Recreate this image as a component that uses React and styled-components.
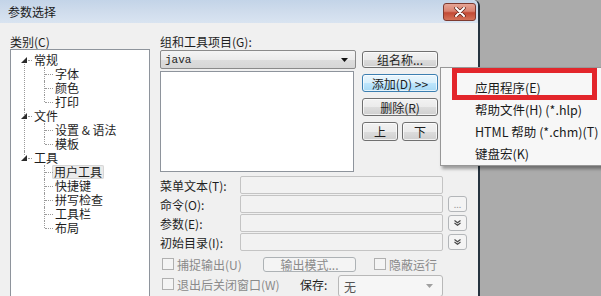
import React from 'react';
import styled, { createGlobalStyle, css } from 'styled-components';

const GlobalStyle = createGlobalStyle`
  html, body {
    margin: 0;
    padding: 0;
    width: 601px;
    height: 296px;
    overflow: hidden;
    background: #ababab;
  }
  body {
    font-family: "Noto Sans CJK SC", "Liberation Sans", sans-serif;
    font-size: 12px;
    color: #1e1e1e;
  }
`

const cjk = `"Noto Sans CJK SC", "Liberation Sans", sans-serif`

// Window

const Screen = styled.div`
  position: relative;
  width: 601px;
  height: 296px;
  overflow: hidden;
`

const Dialog = styled.div`
  width: 478px;
  height: 330px;
  background: #f0f0f0;
  border-right: 2px solid #26333f;
  border-top-right-radius: 6px;
  display: flex;
  flex-direction: column;
`

const TitleBar = styled.div`
  height: 23px;
  flex: none;
  display: flex;
  justify-content: space-between;
  align-items: flex-start;
  padding: 0 2px 0 8px;
  background: linear-gradient(to bottom, #c3d4e8 0%, #cfdcec 50%, #d9e4f1 100%);
  border-top-right-radius: 6px;
`

const Title = styled.div`
  font-size: 12px;
  line-height: 24px;
  color: #1a1a1a;
`

const CloseButton = styled.div`
  width: 31px;
  height: 16px;
  margin-top: 3px;
  border: 1px solid #7d3a30;
  border-radius: 3px;
  background: linear-gradient(to bottom, #e6a596 0%, #d98270 45%, #c24a35 55%, #d4735a 100%);
  display: flex;
  align-items: center;
  justify-content: center;
`

const Body = styled.div`
  flex: 1;
  display: flex;
  padding: 11px 0 0 10px;
`

// Category tree

const LeftColumn = styled.div`
  width: 140px;
  display: flex;
  flex-direction: column;
`

const Label = styled.div`
  height: 15px;
  line-height: 15px;
  font-size: 12px;
  white-space: nowrap;
`

const TreeBox = styled.div`
  flex: 1;
  background: #fff;
  border: 1px solid #8e949c;
  padding-top: 3px;
`

const dotted = css`
  content: '';
  position: absolute;
  border-color: #9a9a9a;
  border-style: dotted;
  border-width: 0;
`

const Group = styled.div`
  position: relative;
  &::before {
    ${dotted};
    left: 13px;
    border-left-width: 1px;
    top: ${({ $first }) => ($first ? '11px' : '0')};
    ${({ $last }) => ($last ? 'height: 4px;' : 'bottom: 0;')}
  }
`

const GroupRow = styled.div`
  position: relative;
  height: 14px;
  padding-left: 23px;
  &::after {
    ${dotted};
    left: 17px;
    width: 4px;
    top: 7px;
    border-top-width: 1px;
  }
`

const Toggle = styled.svg`
  position: absolute;
  left: 10px;
  top: 4px;
  z-index: 1;
`

const ChildRow = styled.div`
  position: relative;
  height: 14px;
  padding-left: 44px;
  &::before {
    ${dotted};
    left: 33px;
    top: 0;
    height: ${({ $last }) => ($last ? '7px' : '14px')};
    border-left-width: 1px;
  }
  &::after {
    ${dotted};
    left: 34px;
    width: 8px;
    top: 7px;
    border-top-width: 1px;
  }
`

const NodeText = styled.span`
  display: inline-block;
  height: 14px;
  line-height: 14px;
  font-size: 12px;
  white-space: nowrap;
  vertical-align: top;
  ${({ $selected }) =>
    $selected &&
    css`
      margin-left: -3px;
      padding: 0 2px;
      background: #ebebeb;
      box-shadow: inset 0 0 0 1px #d6d6d6;
      border-radius: 2px;
    `}
`

// Right side

const RightColumn = styled.div`
  margin-left: 10px;
  display: flex;
  flex-direction: column;
`

const TopArea = styled.div`
  display: flex;
  gap: 6px;
  margin-top: 1px;
`

const ListColumn = styled.div`
  width: 196px;
  display: flex;
  flex-direction: column;
  gap: 2px;
`

const Combo = styled.div`
  height: 17px;
  border: 1px solid #8a8a8a;
  border-radius: 2px;
  background: linear-gradient(to bottom, #f4f4f4 0%, #ebebeb 50%, #dddddd 51%, #d6d6d6 100%);
  display: flex;
  align-items: center;
  justify-content: space-between;
  padding: 0 7px 0 4px;
  font-family: "Liberation Mono", monospace;
  font-size: 11px;
`

const ListBox = styled.div`
  height: 99px;
  width: 192px;
  background: #fff;
  border: 1px solid #8e949c;
`

const ButtonColumn = styled.div`
  width: 76px;
  display: flex;
  flex-direction: column;
  gap: 6px;
  padding-top: 1px;
`

const ButtonRow = styled.div`
  display: flex;
  justify-content: space-between;
`

const Button = styled.div`
  box-sizing: border-box;
  width: ${({ $w }) => $w || 76}px;
  height: ${({ $h }) => $h || 18}px;
  border: 1px solid #707070;
  border-radius: 3px;
  background: linear-gradient(to bottom, #f2f2f2 0%, #ebebeb 50%, #dddddd 51%, #cfcfcf 100%);
  box-shadow: inset 0 0 0 1px rgba(255, 255, 255, 0.7);
  display: flex;
  align-items: center;
  justify-content: center;
  font-size: 12px;
  white-space: nowrap;
  ${({ $focus }) =>
    $focus &&
    css`
      border-color: #3c7fb1;
      background: linear-gradient(to bottom, #eaf6fd 0%, #d9f0fc 50%, #bee6fd 51%, #a7d9f5 100%);
    `}
  ${({ $disabled }) =>
    $disabled &&
    css`
      border-color: #adb2b5;
      background: #f4f4f4;
      color: #8a8a8a;
      box-shadow: none;
    `}
`

const Form = styled.div`
  display: flex;
  flex-direction: column;
  gap: 1px;
  margin-top: 4px;
`

const FormRow = styled.div`
  display: flex;
  align-items: center;
  height: 18px;
`

const FormLabel = styled.div`
  width: 80px;
  font-size: 12px;
  white-space: nowrap;
`

const Input = styled.div`
  box-sizing: border-box;
  width: 203px;
  height: 18px;
  border: 1px solid #c4c4c4;
  border-radius: 2px;
  background: #f2f2f2;
`

const SmallButton = styled.div`
  box-sizing: border-box;
  width: 19px;
  height: 16px;
  margin-left: 5px;
  border: 1px solid #b3b6b9;
  border-radius: 3px;
  background: #f4f4f4;
  display: flex;
  align-items: center;
  justify-content: center;
  font-size: 9px;
  color: #9a9a9a;
`

const OptionRow = styled.div`
  display: flex;
  align-items: center;
  height: ${({ $h }) => $h}px;
  margin-top: ${({ $top }) => $top}px;
  padding-left: 2px;
`

const CheckItem = styled.div`
  display: flex;
  align-items: center;
  gap: 3px;
  width: ${({ $w }) => ($w ? `${$w}px` : 'auto')};
  margin-left: ${({ $ml }) => $ml || 0}px;
  white-space: nowrap;
  color: #8a8a8a;
  font-size: 12px;
`

const CheckBox = styled.span`
  box-sizing: border-box;
  width: 12px;
  height: 12px;
  border: 1px solid #b0b0b0;
  background: #f4f4f4;
`

const SaveLabel = styled.div`
  width: 38px;
  font-size: 12px;
`

const SaveCombo = styled.div`
  box-sizing: border-box;
  width: 105px;
  height: 22px;
  margin-top: 4px;
  border: 1px solid #b8b8b8;
  border-radius: 3px;
  background: #f6f6f6;
  display: flex;
  align-items: center;
  justify-content: space-between;
  padding: 0 9px 0 5px;
  color: #555;
`

// Popup menu

const Menu = styled.div`
  position: absolute;
  left: 440px;
  top: 67px;
  width: 175px;
  height: 99px;
  padding-top: 9px;
  box-sizing: border-box;
  background: #f7f7f7;
  border: 1px solid #979797;
  box-shadow: 2px 3px 3px rgba(0, 0, 0, 0.35);
`

const MenuItem = styled.div`
  height: 22px;
  line-height: 22px;
  padding-left: 34px;
  font-family: ${cjk};
  font-size: 12.5px;
  color: #1a1a1a;
  white-space: nowrap;
`

const Highlight = styled.div`
  position: absolute;
  left: 452px;
  top: 68px;
  width: 145px;
  height: 32px;
  box-sizing: border-box;
  border: 5px solid #e3262b;
`

const tree = [
  { label: '常规', children: ['字体', '颜色', '打印'] },
  { label: '文件', children: ['设置 & 语法', '模板'] },
  { label: '工具', children: ['用户工具', '快捷键', '拼写检查', '工具栏', '布局'] },
]

const fields = [
  { label: '菜单文本(T):' },
  { label: '命令(O):', button: 'dots' },
  { label: '参数(E):', button: 'down' },
  { label: '初始目录(I):', button: 'down' },
]

const DoubleDown = () => (
  <svg width="7" height="6" viewBox="0 0 7 6">
    <path d="M0.5 0.5 L3.5 2.8 L6.5 0.5 M0.5 3 L3.5 5.3 L6.5 3" fill="none" stroke="#444" strokeWidth="1.1" />
  </svg>
)

const ArrowDown = ({ color = '#111' }) => (
  <svg width="7" height="4" viewBox="0 0 7 4">
    <path d="M0 0 H7 L3.5 4 Z" fill={color} />
  </svg>
)

export default function App() {
  return (
    <Screen>
      <GlobalStyle />
      <Dialog>
        <TitleBar>
          <Title>参数选择</Title>
          <CloseButton>
            <svg width="12" height="10" viewBox="0 0 12 10">
              <path d="M2 1 L10 9 M10 1 L2 9" stroke="#5a2219" strokeWidth="3.4" strokeLinecap="round" />
              <path d="M2 1 L10 9 M10 1 L2 9" stroke="#fff" strokeWidth="2" strokeLinecap="round" />
            </svg>
          </CloseButton>
        </TitleBar>
        <Body>
          <LeftColumn>
            <Label>类别(C)</Label>
            <TreeBox>
              {tree.map((group, gi) => (
                <Group key={group.label} $first={gi === 0} $last={gi === tree.length - 1}>
                  <GroupRow>
                    <Toggle width="6" height="6" viewBox="0 0 6 6">
                      <path d="M6 0 V6 H0 Z" fill="#2b2b2b" />
                    </Toggle>
                    <NodeText>{group.label}</NodeText>
                  </GroupRow>
                  {group.children.map((child, ci) => (
                    <ChildRow key={child} $last={ci === group.children.length - 1}>
                      <NodeText $selected={child === '用户工具'}>{child}</NodeText>
                    </ChildRow>
                  ))}
                </Group>
              ))}
            </TreeBox>
          </LeftColumn>

          <RightColumn>
            <Label>组和工具项目(G):</Label>
            <TopArea>
              <ListColumn>
                <Combo>
                  <span>java</span>
                  <ArrowDown />
                </Combo>
                <ListBox />
              </ListColumn>
              <ButtonColumn>
                <Button $h={17}>组名称...</Button>
                <Button $focus>添加(D) &gt;&gt;</Button>
                <Button>删除(R)</Button>
                <ButtonRow>
                  <Button $w={36} $h={19}>上</Button>
                  <Button $w={36} $h={19}>下</Button>
                </ButtonRow>
              </ButtonColumn>
            </TopArea>

            <Form>
              {fields.map((f) => (
                <FormRow key={f.label}>
                  <FormLabel>{f.label}</FormLabel>
                  <Input />
                  {f.button === 'dots' && <SmallButton>...</SmallButton>}
                  {f.button === 'down' && (
                    <SmallButton>
                      <DoubleDown />
                    </SmallButton>
                  )}
                </FormRow>
              ))}
            </Form>

            <OptionRow $h={16} $top={5}>
              <CheckItem $w={101}>
                <CheckBox />
                捕捉输出(U)
              </CheckItem>
              <Button $w={93} $h={15} $disabled>输出模式...</Button>
              <CheckItem $ml={18}>
                <CheckBox />
                隐蔽运行
              </CheckItem>
            </OptionRow>
            <OptionRow $h={20} $top={2}>
              <CheckItem $w={138}>
                <CheckBox />
                退出后关闭窗口(W)
              </CheckItem>
              <SaveLabel>保存:</SaveLabel>
              <SaveCombo>
                <span>无</span>
                <ArrowDown color="#a0a0a0" />
              </SaveCombo>
            </OptionRow>
          </RightColumn>
        </Body>
      </Dialog>

      <Menu>
        <MenuItem>应用程序(E)</MenuItem>
        <MenuItem>帮助文件(H) (*.hlp)</MenuItem>
        <MenuItem>HTML 帮助 (*.chm)(T)</MenuItem>
        <MenuItem>键盘宏(K)</MenuItem>
      </Menu>
      <Highlight />
    </Screen>
  )
}
